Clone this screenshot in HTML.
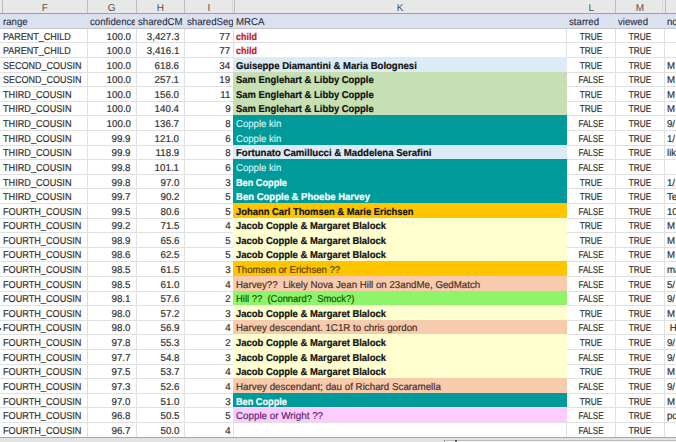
<!DOCTYPE html>
<html><head><meta charset="utf-8"><style>
html,body{margin:0;padding:0;background:#fff;}
body{width:676px;height:442px;overflow:hidden;position:relative;font-family:"Liberation Sans",sans-serif;font-size:10.0px;color:#333333;}
.t{position:absolute;white-space:pre;line-height:normal;text-rendering:geometricPrecision;-webkit-text-stroke:0.2px currentColor;}
.hl{position:absolute;left:0;width:676px;height:1px;background:#e0e0e0;}
.vl{position:absolute;top:13.40px;height:442px;width:1px;background:#e0e0e0;}
.hrow{position:absolute;left:0;width:676px;background:#dce1f0;}
.fill{position:absolute;}
.chbar{position:absolute;left:0;top:0;width:676px;background:#e8e8e8;}
.chs{position:absolute;top:0;width:1px;background:#bcbcbc;}
.chb{position:absolute;left:0;width:676px;height:1.2px;background:#a0a0a0;}
.clip{position:absolute;overflow:hidden;}
.bbar{position:absolute;left:0;width:676px;height:20px;background:#e3e3e3;border-top:1px solid #a8a8a8;}
</style></head>
<body>
<div class="hl" style="top:27.70px"></div>
<div class="hl" style="top:42.30px"></div>
<div class="hl" style="top:56.90px"></div>
<div class="hl" style="top:71.50px"></div>
<div class="hl" style="top:86.10px"></div>
<div class="hl" style="top:100.70px"></div>
<div class="hl" style="top:115.30px"></div>
<div class="hl" style="top:129.90px"></div>
<div class="hl" style="top:144.50px"></div>
<div class="hl" style="top:159.10px"></div>
<div class="hl" style="top:173.70px"></div>
<div class="hl" style="top:188.30px"></div>
<div class="hl" style="top:202.90px"></div>
<div class="hl" style="top:217.50px"></div>
<div class="hl" style="top:232.10px"></div>
<div class="hl" style="top:246.70px"></div>
<div class="hl" style="top:261.30px"></div>
<div class="hl" style="top:275.90px"></div>
<div class="hl" style="top:290.50px"></div>
<div class="hl" style="top:305.10px"></div>
<div class="hl" style="top:319.70px"></div>
<div class="hl" style="top:334.30px"></div>
<div class="hl" style="top:348.90px"></div>
<div class="hl" style="top:363.50px"></div>
<div class="hl" style="top:378.10px"></div>
<div class="hl" style="top:392.70px"></div>
<div class="hl" style="top:407.30px"></div>
<div class="hl" style="top:421.90px"></div>
<div class="hl" style="top:436.50px"></div>
<div class="vl" style="left:86.70px"></div>
<div class="vl" style="left:135.50px"></div>
<div class="vl" style="left:184.20px"></div>
<div class="vl" style="left:232.70px"></div>
<div class="vl" style="left:566.30px"></div>
<div class="vl" style="left:615.10px"></div>
<div class="vl" style="left:663.70px"></div>
<div class="hrow" style="top:13.40px;height:14.80px"></div>
<div class="hl" style="top:27.60px;background:#c4c6cc"></div>
<div class="fill" style="top:56.90px;height:15.10px;left:233.20px;width:334.10px;background:#ddebf7"></div>
<div class="fill" style="top:71.50px;height:15.10px;left:233.20px;width:334.10px;background:#c6e0b4"></div>
<div class="fill" style="top:86.10px;height:15.10px;left:233.20px;width:334.10px;background:#c6e0b4"></div>
<div class="fill" style="top:100.70px;height:15.10px;left:233.20px;width:334.10px;background:#c6e0b4"></div>
<div class="fill" style="top:115.30px;height:15.10px;left:233.20px;width:334.10px;background:#009a9a"></div>
<div class="fill" style="top:129.90px;height:15.10px;left:233.20px;width:334.10px;background:#009a9a"></div>
<div class="fill" style="top:144.50px;height:15.10px;left:233.20px;width:334.10px;background:#ddebf7"></div>
<div class="fill" style="top:159.10px;height:15.10px;left:233.20px;width:334.10px;background:#009a9a"></div>
<div class="fill" style="top:173.70px;height:15.10px;left:233.20px;width:334.10px;background:#009a9a"></div>
<div class="fill" style="top:188.30px;height:15.10px;left:233.20px;width:334.10px;background:#009a9a"></div>
<div class="fill" style="top:202.90px;height:15.10px;left:233.20px;width:334.10px;background:#ffc600"></div>
<div class="fill" style="top:217.50px;height:15.10px;left:233.20px;width:334.10px;background:#ffffd0"></div>
<div class="fill" style="top:232.10px;height:15.10px;left:233.20px;width:334.10px;background:#ffffd0"></div>
<div class="fill" style="top:246.70px;height:15.10px;left:233.20px;width:334.10px;background:#ffffd0"></div>
<div class="fill" style="top:261.30px;height:15.10px;left:233.20px;width:334.10px;background:#ffc600"></div>
<div class="fill" style="top:275.90px;height:15.10px;left:233.20px;width:334.10px;background:#f8cbad"></div>
<div class="fill" style="top:290.50px;height:15.10px;left:233.20px;width:334.10px;background:#8ef46a"></div>
<div class="fill" style="top:305.10px;height:15.10px;left:233.20px;width:334.10px;background:#ffffd0"></div>
<div class="fill" style="top:319.70px;height:15.10px;left:233.20px;width:334.10px;background:#f8cbad"></div>
<div class="fill" style="top:334.30px;height:15.10px;left:233.20px;width:334.10px;background:#ffffd0"></div>
<div class="fill" style="top:348.90px;height:15.10px;left:233.20px;width:334.10px;background:#ffffd0"></div>
<div class="fill" style="top:363.50px;height:15.10px;left:233.20px;width:334.10px;background:#ffffd0"></div>
<div class="fill" style="top:378.10px;height:15.10px;left:233.20px;width:334.10px;background:#f8cbad"></div>
<div class="fill" style="top:392.70px;height:15.10px;left:233.20px;width:334.10px;background:#009a9a"></div>
<div class="fill" style="top:407.30px;height:15.10px;left:233.20px;width:334.10px;background:#ffccff"></div>
<div class="chbar" style="height:13.40px"></div>
<div class="chs" style="left:2.00px;height:13.40px"></div>
<div class="chs" style="left:86.70px;height:13.40px"></div>
<div class="chs" style="left:135.50px;height:13.40px"></div>
<div class="chs" style="left:184.20px;height:13.40px"></div>
<div class="chs" style="left:615.10px;height:13.40px"></div>
<div class="chs" style="left:231.90px;height:13.40px;background:#d8d8d8"></div>
<div class="chs" style="left:233.90px;height:13.40px"></div>
<div class="chs" style="left:662.10px;height:13.40px;background:#d8d8d8"></div>
<div class="chs" style="left:664.80px;height:13.40px"></div>
<div class="chb" style="top:12.80px"></div>
<span class="t" style="top:2.75px;left:44.85px;transform:translateX(-50%);color:#505050;font-size:10.00px;-webkit-text-stroke:0;">F</span>
<span class="t" style="top:2.75px;left:111.60px;transform:translateX(-50%);color:#505050;font-size:10.00px;-webkit-text-stroke:0;">G</span>
<span class="t" style="top:2.75px;left:160.35px;transform:translateX(-50%);color:#505050;font-size:10.00px;-webkit-text-stroke:0;">H</span>
<span class="t" style="top:2.75px;left:208.95px;transform:translateX(-50%);color:#505050;font-size:10.00px;-webkit-text-stroke:0;">I</span>
<span class="t" style="top:2.75px;left:400.00px;transform:translateX(-50%);color:#505050;font-size:10.00px;-webkit-text-stroke:0;">K</span>
<span class="t" style="top:2.75px;left:591.20px;transform:translateX(-50%);color:#505050;font-size:10.00px;-webkit-text-stroke:0;">L</span>
<span class="t" style="top:2.75px;left:639.90px;transform:translateX(-50%);color:#505050;font-size:10.00px;-webkit-text-stroke:0;">M</span>
<div class="clip" style="left:2.50px;width:84.20px;top:13.40px;height:14.80px"><span class="t" style="top:3.45px;left:0.80px;color:#263040;transform:scaleX(0.966);transform-origin:left;-webkit-text-stroke:0.10px;">range</span></div>
<div class="clip" style="left:87.20px;width:48.30px;top:13.40px;height:14.80px"><span class="t" style="top:3.45px;left:2.40px;color:#263040;transform:scaleX(0.966);transform-origin:left;-webkit-text-stroke:0.10px;">confidence</span></div>
<div class="clip" style="left:136.00px;width:48.20px;top:13.40px;height:14.80px"><span class="t" style="top:3.45px;left:2.40px;color:#263040;transform:scaleX(0.966);transform-origin:left;-webkit-text-stroke:0.10px;">sharedCM</span></div>
<div class="clip" style="left:184.70px;width:48.00px;top:13.40px;height:14.80px"><span class="t" style="top:3.45px;left:2.40px;color:#263040;transform:scaleX(0.966);transform-origin:left;-webkit-text-stroke:0.10px;">sharedSegments</span></div>
<div class="clip" style="left:233.20px;width:333.10px;top:13.40px;height:14.80px"><span class="t" style="top:3.45px;left:2.40px;color:#263040;transform:scaleX(0.966);transform-origin:left;-webkit-text-stroke:0.10px;">MRCA</span></div>
<div class="clip" style="left:566.80px;width:48.30px;top:13.40px;height:14.80px"><span class="t" style="top:3.45px;left:2.40px;color:#263040;transform:scaleX(0.966);transform-origin:left;-webkit-text-stroke:0.10px;">starred</span></div>
<div class="clip" style="left:615.60px;width:48.10px;top:13.40px;height:14.80px"><span class="t" style="top:3.45px;left:2.40px;color:#263040;transform:scaleX(0.966);transform-origin:left;-webkit-text-stroke:0.10px;">viewed</span></div>
<div class="clip" style="left:664.20px;width:75.30px;top:13.40px;height:14.80px"><span class="t" style="top:3.45px;left:2.40px;color:#263040;transform:scaleX(0.966);transform-origin:left;-webkit-text-stroke:0.10px;">notes</span></div>
<span class="t" style="top:32.00px;left:3.40px;transform:scaleX(0.8999);transform-origin:left;">PARENT_CHILD</span>
<span class="t" style="top:32.00px;right:545.40px;transform:scaleX(0.976);transform-origin:right;">100.0</span>
<span class="t" style="top:32.00px;right:496.70px;transform:scaleX(0.976);transform-origin:right;">3,427.3</span>
<span class="t" style="top:32.00px;right:445.40px;transform:scaleX(0.976);transform-origin:right;">77</span>
<span class="t" style="top:32.00px;left:235.50px;color:#c0202a;font-weight:bold;transform:scaleX(0.8958);transform-origin:left;">child</span>
<span class="t" style="top:32.00px;left:591.20px;transform:translateX(-50%) scaleX(0.825);">TRUE</span>
<span class="t" style="top:32.00px;left:639.90px;transform:translateX(-50%) scaleX(0.825);">TRUE</span>
<span class="t" style="top:46.00px;left:3.40px;transform:scaleX(0.8999);transform-origin:left;">PARENT_CHILD</span>
<span class="t" style="top:46.00px;right:545.40px;transform:scaleX(0.976);transform-origin:right;">100.0</span>
<span class="t" style="top:46.00px;right:496.70px;transform:scaleX(0.976);transform-origin:right;">3,416.1</span>
<span class="t" style="top:46.00px;right:445.40px;transform:scaleX(0.976);transform-origin:right;">77</span>
<span class="t" style="top:46.00px;left:235.50px;color:#c0202a;font-weight:bold;transform:scaleX(0.8958);transform-origin:left;">child</span>
<span class="t" style="top:46.00px;left:591.20px;transform:translateX(-50%) scaleX(0.825);">TRUE</span>
<span class="t" style="top:46.00px;left:639.90px;transform:translateX(-50%) scaleX(0.825);">TRUE</span>
<span class="t" style="top:61.00px;left:3.40px;transform:scaleX(0.8992);transform-origin:left;">SECOND_COUSIN</span>
<span class="t" style="top:61.00px;right:545.40px;transform:scaleX(0.976);transform-origin:right;">100.0</span>
<span class="t" style="top:61.00px;right:496.70px;transform:scaleX(0.976);transform-origin:right;">618.6</span>
<span class="t" style="top:61.00px;right:445.40px;transform:scaleX(0.976);transform-origin:right;">34</span>
<span class="t" style="top:61.00px;left:235.50px;color:#111111;font-weight:bold;transform:scaleX(0.9541);transform-origin:left;">Guiseppe Diamantini &amp; Maria Bolognesi</span>
<span class="t" style="top:61.00px;left:591.20px;transform:translateX(-50%) scaleX(0.825);">TRUE</span>
<span class="t" style="top:61.00px;left:639.90px;transform:translateX(-50%) scaleX(0.825);">TRUE</span>
<span class="t" style="top:61.00px;left:666.50px;transform:scaleX(0.965);transform-origin:left;">M</span>
<span class="t" style="top:75.00px;left:3.40px;transform:scaleX(0.8992);transform-origin:left;">SECOND_COUSIN</span>
<span class="t" style="top:75.00px;right:545.40px;transform:scaleX(0.976);transform-origin:right;">100.0</span>
<span class="t" style="top:75.00px;right:496.70px;transform:scaleX(0.976);transform-origin:right;">257.1</span>
<span class="t" style="top:75.00px;right:445.40px;transform:scaleX(0.976);transform-origin:right;">19</span>
<span class="t" style="top:75.00px;left:235.50px;color:#111111;font-weight:bold;transform:scaleX(0.9423);transform-origin:left;">Sam Englehart &amp; Libby Copple</span>
<span class="t" style="top:75.00px;left:591.20px;transform:translateX(-50%) scaleX(0.805);">FALSE</span>
<span class="t" style="top:75.00px;left:639.90px;transform:translateX(-50%) scaleX(0.825);">TRUE</span>
<span class="t" style="top:75.00px;left:666.50px;transform:scaleX(0.965);transform-origin:left;">M</span>
<span class="t" style="top:90.00px;left:3.40px;transform:scaleX(0.9133);transform-origin:left;">THIRD_COUSIN</span>
<span class="t" style="top:90.00px;right:545.40px;transform:scaleX(0.976);transform-origin:right;">100.0</span>
<span class="t" style="top:90.00px;right:496.70px;transform:scaleX(0.976);transform-origin:right;">156.0</span>
<span class="t" style="top:90.00px;right:445.40px;transform:scaleX(0.976);transform-origin:right;">11</span>
<span class="t" style="top:90.00px;left:235.50px;color:#111111;font-weight:bold;transform:scaleX(0.9423);transform-origin:left;">Sam Englehart &amp; Libby Copple</span>
<span class="t" style="top:90.00px;left:591.20px;transform:translateX(-50%) scaleX(0.825);">TRUE</span>
<span class="t" style="top:90.00px;left:639.90px;transform:translateX(-50%) scaleX(0.825);">TRUE</span>
<span class="t" style="top:90.00px;left:666.50px;transform:scaleX(0.965);transform-origin:left;">M</span>
<span class="t" style="top:104.00px;left:3.40px;transform:scaleX(0.9133);transform-origin:left;">THIRD_COUSIN</span>
<span class="t" style="top:104.00px;right:545.40px;transform:scaleX(0.976);transform-origin:right;">100.0</span>
<span class="t" style="top:104.00px;right:496.70px;transform:scaleX(0.976);transform-origin:right;">140.4</span>
<span class="t" style="top:104.00px;right:445.40px;transform:scaleX(0.976);transform-origin:right;">9</span>
<span class="t" style="top:104.00px;left:235.50px;color:#111111;font-weight:bold;transform:scaleX(0.9423);transform-origin:left;">Sam Englehart &amp; Libby Copple</span>
<span class="t" style="top:104.00px;left:591.20px;transform:translateX(-50%) scaleX(0.825);">TRUE</span>
<span class="t" style="top:104.00px;left:639.90px;transform:translateX(-50%) scaleX(0.825);">TRUE</span>
<span class="t" style="top:104.00px;left:666.50px;transform:scaleX(0.965);transform-origin:left;">M</span>
<span class="t" style="top:119.00px;left:3.40px;transform:scaleX(0.9133);transform-origin:left;">THIRD_COUSIN</span>
<span class="t" style="top:119.00px;right:545.40px;transform:scaleX(0.976);transform-origin:right;">100.0</span>
<span class="t" style="top:119.00px;right:496.70px;transform:scaleX(0.976);transform-origin:right;">136.7</span>
<span class="t" style="top:119.00px;right:445.40px;transform:scaleX(0.976);transform-origin:right;">8</span>
<span class="t" style="top:119.00px;left:235.50px;color:#cdeeee;transform:scaleX(0.9582);transform-origin:left;">Copple kin</span>
<span class="t" style="top:119.00px;left:591.20px;transform:translateX(-50%) scaleX(0.805);">FALSE</span>
<span class="t" style="top:119.00px;left:639.90px;transform:translateX(-50%) scaleX(0.825);">TRUE</span>
<span class="t" style="top:119.00px;left:666.50px;transform:scaleX(0.965);transform-origin:left;">9/</span>
<span class="t" style="top:134.00px;left:3.40px;transform:scaleX(0.9133);transform-origin:left;">THIRD_COUSIN</span>
<span class="t" style="top:134.00px;right:545.40px;transform:scaleX(0.976);transform-origin:right;">99.9</span>
<span class="t" style="top:134.00px;right:496.70px;transform:scaleX(0.976);transform-origin:right;">121.0</span>
<span class="t" style="top:134.00px;right:445.40px;transform:scaleX(0.976);transform-origin:right;">6</span>
<span class="t" style="top:134.00px;left:235.50px;color:#cdeeee;transform:scaleX(0.9582);transform-origin:left;">Copple kin</span>
<span class="t" style="top:134.00px;left:591.20px;transform:translateX(-50%) scaleX(0.805);">FALSE</span>
<span class="t" style="top:134.00px;left:639.90px;transform:translateX(-50%) scaleX(0.825);">TRUE</span>
<span class="t" style="top:134.00px;left:666.50px;transform:scaleX(0.965);transform-origin:left;">1/</span>
<span class="t" style="top:148.00px;left:3.40px;transform:scaleX(0.9133);transform-origin:left;">THIRD_COUSIN</span>
<span class="t" style="top:148.00px;right:545.40px;transform:scaleX(0.976);transform-origin:right;">99.9</span>
<span class="t" style="top:148.00px;right:496.70px;transform:scaleX(0.976);transform-origin:right;">118.9</span>
<span class="t" style="top:148.00px;right:445.40px;transform:scaleX(0.976);transform-origin:right;">8</span>
<span class="t" style="top:148.00px;left:235.50px;color:#111111;font-weight:bold;transform:scaleX(0.9611);transform-origin:left;">Fortunato Camillucci &amp; Maddelena Serafini</span>
<span class="t" style="top:148.00px;left:591.20px;transform:translateX(-50%) scaleX(0.805);">FALSE</span>
<span class="t" style="top:148.00px;left:639.90px;transform:translateX(-50%) scaleX(0.825);">TRUE</span>
<span class="t" style="top:148.00px;left:666.50px;transform:scaleX(0.965);transform-origin:left;">lik</span>
<span class="t" style="top:163.00px;left:3.40px;transform:scaleX(0.9133);transform-origin:left;">THIRD_COUSIN</span>
<span class="t" style="top:163.00px;right:545.40px;transform:scaleX(0.976);transform-origin:right;">99.8</span>
<span class="t" style="top:163.00px;right:496.70px;transform:scaleX(0.976);transform-origin:right;">101.1</span>
<span class="t" style="top:163.00px;right:445.40px;transform:scaleX(0.976);transform-origin:right;">6</span>
<span class="t" style="top:163.00px;left:235.50px;color:#cdeeee;transform:scaleX(0.9582);transform-origin:left;">Copple kin</span>
<span class="t" style="top:163.00px;left:591.20px;transform:translateX(-50%) scaleX(0.805);">FALSE</span>
<span class="t" style="top:163.00px;left:639.90px;transform:translateX(-50%) scaleX(0.825);">TRUE</span>
<span class="t" style="top:178.00px;left:3.40px;transform:scaleX(0.9133);transform-origin:left;">THIRD_COUSIN</span>
<span class="t" style="top:178.00px;right:545.40px;transform:scaleX(0.976);transform-origin:right;">99.8</span>
<span class="t" style="top:178.00px;right:496.70px;transform:scaleX(0.976);transform-origin:right;">97.0</span>
<span class="t" style="top:178.00px;right:445.40px;transform:scaleX(0.976);transform-origin:right;">3</span>
<span class="t" style="top:178.00px;left:235.50px;color:#ffffff;font-weight:bold;transform:scaleX(0.9171);transform-origin:left;">Ben Copple</span>
<span class="t" style="top:178.00px;left:591.20px;transform:translateX(-50%) scaleX(0.825);">TRUE</span>
<span class="t" style="top:178.00px;left:639.90px;transform:translateX(-50%) scaleX(0.825);">TRUE</span>
<span class="t" style="top:178.00px;left:666.50px;transform:scaleX(0.965);transform-origin:left;">1/</span>
<span class="t" style="top:192.00px;left:3.40px;transform:scaleX(0.9133);transform-origin:left;">THIRD_COUSIN</span>
<span class="t" style="top:192.00px;right:545.40px;transform:scaleX(0.976);transform-origin:right;">99.7</span>
<span class="t" style="top:192.00px;right:496.70px;transform:scaleX(0.976);transform-origin:right;">90.2</span>
<span class="t" style="top:192.00px;right:445.40px;transform:scaleX(0.976);transform-origin:right;">5</span>
<span class="t" style="top:192.00px;left:235.50px;color:#ffffff;font-weight:bold;transform:scaleX(0.9526);transform-origin:left;">Ben Copple &amp; Phoebe Harvey</span>
<span class="t" style="top:192.00px;left:591.20px;transform:translateX(-50%) scaleX(0.825);">TRUE</span>
<span class="t" style="top:192.00px;left:639.90px;transform:translateX(-50%) scaleX(0.825);">TRUE</span>
<span class="t" style="top:192.00px;left:666.50px;transform:scaleX(0.965);transform-origin:left;">Te</span>
<span class="t" style="top:207.00px;left:3.40px;transform:scaleX(0.9128);transform-origin:left;">FOURTH_COUSIN</span>
<span class="t" style="top:207.00px;right:545.40px;transform:scaleX(0.976);transform-origin:right;">99.5</span>
<span class="t" style="top:207.00px;right:496.70px;transform:scaleX(0.976);transform-origin:right;">80.6</span>
<span class="t" style="top:207.00px;right:445.40px;transform:scaleX(0.976);transform-origin:right;">5</span>
<span class="t" style="top:207.00px;left:235.50px;color:#111111;font-weight:bold;transform:scaleX(0.9393);transform-origin:left;">Johann Carl Thomsen &amp; Marie Erichsen</span>
<span class="t" style="top:207.00px;left:591.20px;transform:translateX(-50%) scaleX(0.805);">FALSE</span>
<span class="t" style="top:207.00px;left:639.90px;transform:translateX(-50%) scaleX(0.825);">TRUE</span>
<span class="t" style="top:207.00px;left:666.50px;transform:scaleX(0.965);transform-origin:left;">10</span>
<span class="t" style="top:221.00px;left:3.40px;transform:scaleX(0.9128);transform-origin:left;">FOURTH_COUSIN</span>
<span class="t" style="top:221.00px;right:545.40px;transform:scaleX(0.976);transform-origin:right;">99.2</span>
<span class="t" style="top:221.00px;right:496.70px;transform:scaleX(0.976);transform-origin:right;">71.5</span>
<span class="t" style="top:221.00px;right:445.40px;transform:scaleX(0.976);transform-origin:right;">4</span>
<span class="t" style="top:221.00px;left:235.50px;color:#111111;font-weight:bold;transform:scaleX(0.9436);transform-origin:left;">Jacob Copple &amp; Margaret Blalock</span>
<span class="t" style="top:221.00px;left:591.20px;transform:translateX(-50%) scaleX(0.825);">TRUE</span>
<span class="t" style="top:221.00px;left:639.90px;transform:translateX(-50%) scaleX(0.825);">TRUE</span>
<span class="t" style="top:221.00px;left:666.50px;transform:scaleX(0.965);transform-origin:left;">M</span>
<span class="t" style="top:236.00px;left:3.40px;transform:scaleX(0.9128);transform-origin:left;">FOURTH_COUSIN</span>
<span class="t" style="top:236.00px;right:545.40px;transform:scaleX(0.976);transform-origin:right;">98.9</span>
<span class="t" style="top:236.00px;right:496.70px;transform:scaleX(0.976);transform-origin:right;">65.6</span>
<span class="t" style="top:236.00px;right:445.40px;transform:scaleX(0.976);transform-origin:right;">5</span>
<span class="t" style="top:236.00px;left:235.50px;color:#111111;font-weight:bold;transform:scaleX(0.9436);transform-origin:left;">Jacob Copple &amp; Margaret Blalock</span>
<span class="t" style="top:236.00px;left:591.20px;transform:translateX(-50%) scaleX(0.825);">TRUE</span>
<span class="t" style="top:236.00px;left:639.90px;transform:translateX(-50%) scaleX(0.825);">TRUE</span>
<span class="t" style="top:236.00px;left:666.50px;transform:scaleX(0.965);transform-origin:left;">M</span>
<span class="t" style="top:250.00px;left:3.40px;transform:scaleX(0.9128);transform-origin:left;">FOURTH_COUSIN</span>
<span class="t" style="top:250.00px;right:545.40px;transform:scaleX(0.976);transform-origin:right;">98.6</span>
<span class="t" style="top:250.00px;right:496.70px;transform:scaleX(0.976);transform-origin:right;">62.5</span>
<span class="t" style="top:250.00px;right:445.40px;transform:scaleX(0.976);transform-origin:right;">5</span>
<span class="t" style="top:250.00px;left:235.50px;color:#111111;font-weight:bold;transform:scaleX(0.9436);transform-origin:left;">Jacob Copple &amp; Margaret Blalock</span>
<span class="t" style="top:250.00px;left:591.20px;transform:translateX(-50%) scaleX(0.805);">FALSE</span>
<span class="t" style="top:250.00px;left:639.90px;transform:translateX(-50%) scaleX(0.825);">TRUE</span>
<span class="t" style="top:250.00px;left:666.50px;transform:scaleX(0.965);transform-origin:left;">M</span>
<span class="t" style="top:265.00px;left:3.40px;transform:scaleX(0.9128);transform-origin:left;">FOURTH_COUSIN</span>
<span class="t" style="top:265.00px;right:545.40px;transform:scaleX(0.976);transform-origin:right;">98.5</span>
<span class="t" style="top:265.00px;right:496.70px;transform:scaleX(0.976);transform-origin:right;">61.5</span>
<span class="t" style="top:265.00px;right:445.40px;transform:scaleX(0.976);transform-origin:right;">3</span>
<span class="t" style="top:265.00px;left:235.50px;color:#5a4000;transform:scaleX(0.9553);transform-origin:left;">Thomsen or Erichsen ??</span>
<span class="t" style="top:265.00px;left:591.20px;transform:translateX(-50%) scaleX(0.805);">FALSE</span>
<span class="t" style="top:265.00px;left:639.90px;transform:translateX(-50%) scaleX(0.825);">TRUE</span>
<span class="t" style="top:265.00px;left:666.50px;transform:scaleX(0.965);transform-origin:left;">ma</span>
<span class="t" style="top:280.00px;left:3.40px;transform:scaleX(0.9128);transform-origin:left;">FOURTH_COUSIN</span>
<span class="t" style="top:280.00px;right:545.40px;transform:scaleX(0.976);transform-origin:right;">98.5</span>
<span class="t" style="top:280.00px;right:496.70px;transform:scaleX(0.976);transform-origin:right;">61.0</span>
<span class="t" style="top:280.00px;right:445.40px;transform:scaleX(0.976);transform-origin:right;">4</span>
<span class="t" style="top:280.00px;left:235.50px;color:#4a3428;transform:scaleX(0.9721);transform-origin:left;">Harvey??&nbsp; Likely Nova Jean Hill on 23andMe, GedMatch</span>
<span class="t" style="top:280.00px;left:591.20px;transform:translateX(-50%) scaleX(0.805);">FALSE</span>
<span class="t" style="top:280.00px;left:639.90px;transform:translateX(-50%) scaleX(0.825);">TRUE</span>
<span class="t" style="top:280.00px;left:666.50px;transform:scaleX(0.965);transform-origin:left;">5/</span>
<span class="t" style="top:294.00px;left:3.40px;transform:scaleX(0.9128);transform-origin:left;">FOURTH_COUSIN</span>
<span class="t" style="top:294.00px;right:545.40px;transform:scaleX(0.976);transform-origin:right;">98.1</span>
<span class="t" style="top:294.00px;right:496.70px;transform:scaleX(0.976);transform-origin:right;">57.6</span>
<span class="t" style="top:294.00px;right:445.40px;transform:scaleX(0.976);transform-origin:right;">2</span>
<span class="t" style="top:294.00px;left:235.50px;color:#0a5a0a;transform:scaleX(0.9428);transform-origin:left;">Hill ??&nbsp; (Connard?&nbsp; Smock?)</span>
<span class="t" style="top:294.00px;left:591.20px;transform:translateX(-50%) scaleX(0.805);">FALSE</span>
<span class="t" style="top:294.00px;left:639.90px;transform:translateX(-50%) scaleX(0.825);">TRUE</span>
<span class="t" style="top:294.00px;left:666.50px;transform:scaleX(0.965);transform-origin:left;">9/</span>
<span class="t" style="top:309.00px;left:3.40px;transform:scaleX(0.9128);transform-origin:left;">FOURTH_COUSIN</span>
<span class="t" style="top:309.00px;right:545.40px;transform:scaleX(0.976);transform-origin:right;">98.0</span>
<span class="t" style="top:309.00px;right:496.70px;transform:scaleX(0.976);transform-origin:right;">57.2</span>
<span class="t" style="top:309.00px;right:445.40px;transform:scaleX(0.976);transform-origin:right;">3</span>
<span class="t" style="top:309.00px;left:235.50px;color:#111111;font-weight:bold;transform:scaleX(0.9436);transform-origin:left;">Jacob Copple &amp; Margaret Blalock</span>
<span class="t" style="top:309.00px;left:591.20px;transform:translateX(-50%) scaleX(0.825);">TRUE</span>
<span class="t" style="top:309.00px;left:639.90px;transform:translateX(-50%) scaleX(0.825);">TRUE</span>
<span class="t" style="top:309.00px;left:666.50px;transform:scaleX(0.965);transform-origin:left;">M</span>
<span class="t" style="top:323.00px;left:3.40px;transform:scaleX(0.9128);transform-origin:left;">FOURTH_COUSIN</span>
<span class="t" style="top:323.00px;right:545.40px;transform:scaleX(0.976);transform-origin:right;">98.0</span>
<span class="t" style="top:323.00px;right:496.70px;transform:scaleX(0.976);transform-origin:right;">56.9</span>
<span class="t" style="top:323.00px;right:445.40px;transform:scaleX(0.976);transform-origin:right;">4</span>
<span class="t" style="top:323.00px;left:235.50px;color:#4a3428;transform:scaleX(0.9749);transform-origin:left;">Harvey descendant. 1C1R to chris gordon</span>
<span class="t" style="top:323.00px;left:591.20px;transform:translateX(-50%) scaleX(0.805);">FALSE</span>
<span class="t" style="top:323.00px;left:639.90px;transform:translateX(-50%) scaleX(0.825);">TRUE</span>
<span class="t" style="top:323.00px;left:666.50px;transform:scaleX(0.965);transform-origin:left;"> H</span>
<span class="t" style="top:338.00px;left:3.40px;transform:scaleX(0.9128);transform-origin:left;">FOURTH_COUSIN</span>
<span class="t" style="top:338.00px;right:545.40px;transform:scaleX(0.976);transform-origin:right;">97.8</span>
<span class="t" style="top:338.00px;right:496.70px;transform:scaleX(0.976);transform-origin:right;">55.3</span>
<span class="t" style="top:338.00px;right:445.40px;transform:scaleX(0.976);transform-origin:right;">2</span>
<span class="t" style="top:338.00px;left:235.50px;color:#111111;font-weight:bold;transform:scaleX(0.9436);transform-origin:left;">Jacob Copple &amp; Margaret Blalock</span>
<span class="t" style="top:338.00px;left:591.20px;transform:translateX(-50%) scaleX(0.825);">TRUE</span>
<span class="t" style="top:338.00px;left:639.90px;transform:translateX(-50%) scaleX(0.825);">TRUE</span>
<span class="t" style="top:338.00px;left:666.50px;transform:scaleX(0.965);transform-origin:left;">9/</span>
<span class="t" style="top:353.00px;left:3.40px;transform:scaleX(0.9128);transform-origin:left;">FOURTH_COUSIN</span>
<span class="t" style="top:353.00px;right:545.40px;transform:scaleX(0.976);transform-origin:right;">97.7</span>
<span class="t" style="top:353.00px;right:496.70px;transform:scaleX(0.976);transform-origin:right;">54.8</span>
<span class="t" style="top:353.00px;right:445.40px;transform:scaleX(0.976);transform-origin:right;">3</span>
<span class="t" style="top:353.00px;left:235.50px;color:#111111;font-weight:bold;transform:scaleX(0.9436);transform-origin:left;">Jacob Copple &amp; Margaret Blalock</span>
<span class="t" style="top:353.00px;left:591.20px;transform:translateX(-50%) scaleX(0.805);">FALSE</span>
<span class="t" style="top:353.00px;left:639.90px;transform:translateX(-50%) scaleX(0.825);">TRUE</span>
<span class="t" style="top:353.00px;left:666.50px;transform:scaleX(0.965);transform-origin:left;">9/</span>
<span class="t" style="top:367.00px;left:3.40px;transform:scaleX(0.9128);transform-origin:left;">FOURTH_COUSIN</span>
<span class="t" style="top:367.00px;right:545.40px;transform:scaleX(0.976);transform-origin:right;">97.5</span>
<span class="t" style="top:367.00px;right:496.70px;transform:scaleX(0.976);transform-origin:right;">53.7</span>
<span class="t" style="top:367.00px;right:445.40px;transform:scaleX(0.976);transform-origin:right;">4</span>
<span class="t" style="top:367.00px;left:235.50px;color:#111111;font-weight:bold;transform:scaleX(0.9436);transform-origin:left;">Jacob Copple &amp; Margaret Blalock</span>
<span class="t" style="top:367.00px;left:591.20px;transform:translateX(-50%) scaleX(0.825);">TRUE</span>
<span class="t" style="top:367.00px;left:639.90px;transform:translateX(-50%) scaleX(0.825);">TRUE</span>
<span class="t" style="top:367.00px;left:666.50px;transform:scaleX(0.965);transform-origin:left;">M</span>
<span class="t" style="top:382.00px;left:3.40px;transform:scaleX(0.9128);transform-origin:left;">FOURTH_COUSIN</span>
<span class="t" style="top:382.00px;right:545.40px;transform:scaleX(0.976);transform-origin:right;">97.3</span>
<span class="t" style="top:382.00px;right:496.70px;transform:scaleX(0.976);transform-origin:right;">52.6</span>
<span class="t" style="top:382.00px;right:445.40px;transform:scaleX(0.976);transform-origin:right;">4</span>
<span class="t" style="top:382.00px;left:235.50px;color:#4a3428;transform:scaleX(0.9777);transform-origin:left;">Harvey descendant; dau of Richard Scaramella</span>
<span class="t" style="top:382.00px;left:591.20px;transform:translateX(-50%) scaleX(0.805);">FALSE</span>
<span class="t" style="top:382.00px;left:639.90px;transform:translateX(-50%) scaleX(0.825);">TRUE</span>
<span class="t" style="top:382.00px;left:666.50px;transform:scaleX(0.965);transform-origin:left;">9/</span>
<span class="t" style="top:397.00px;left:3.40px;transform:scaleX(0.9128);transform-origin:left;">FOURTH_COUSIN</span>
<span class="t" style="top:397.00px;right:545.40px;transform:scaleX(0.976);transform-origin:right;">97.0</span>
<span class="t" style="top:397.00px;right:496.70px;transform:scaleX(0.976);transform-origin:right;">51.0</span>
<span class="t" style="top:397.00px;right:445.40px;transform:scaleX(0.976);transform-origin:right;">3</span>
<span class="t" style="top:397.00px;left:235.50px;color:#ffffff;font-weight:bold;transform:scaleX(0.9171);transform-origin:left;">Ben Copple</span>
<span class="t" style="top:397.00px;left:591.20px;transform:translateX(-50%) scaleX(0.825);">TRUE</span>
<span class="t" style="top:397.00px;left:639.90px;transform:translateX(-50%) scaleX(0.825);">TRUE</span>
<span class="t" style="top:397.00px;left:666.50px;transform:scaleX(0.965);transform-origin:left;">M</span>
<span class="t" style="top:411.00px;left:3.40px;transform:scaleX(0.9128);transform-origin:left;">FOURTH_COUSIN</span>
<span class="t" style="top:411.00px;right:545.40px;transform:scaleX(0.976);transform-origin:right;">96.8</span>
<span class="t" style="top:411.00px;right:496.70px;transform:scaleX(0.976);transform-origin:right;">50.5</span>
<span class="t" style="top:411.00px;right:445.40px;transform:scaleX(0.976);transform-origin:right;">5</span>
<span class="t" style="top:411.00px;left:235.50px;color:#5c2a70;transform:scaleX(0.9807);transform-origin:left;">Copple or Wright ??</span>
<span class="t" style="top:411.00px;left:591.20px;transform:translateX(-50%) scaleX(0.805);">FALSE</span>
<span class="t" style="top:411.00px;left:639.90px;transform:translateX(-50%) scaleX(0.825);">TRUE</span>
<span class="t" style="top:411.00px;left:666.50px;transform:scaleX(0.965);transform-origin:left;">po</span>
<span class="t" style="top:426.00px;left:3.40px;transform:scaleX(0.9128);transform-origin:left;">FOURTH_COUSIN</span>
<span class="t" style="top:426.00px;right:545.40px;transform:scaleX(0.976);transform-origin:right;">96.7</span>
<span class="t" style="top:426.00px;right:496.70px;transform:scaleX(0.976);transform-origin:right;">50.0</span>
<span class="t" style="top:426.00px;right:445.40px;transform:scaleX(0.976);transform-origin:right;">4</span>
<span class="t" style="top:426.00px;left:591.20px;transform:translateX(-50%) scaleX(0.805);">FALSE</span>
<span class="t" style="top:426.00px;left:639.90px;transform:translateX(-50%) scaleX(0.825);">TRUE</span>
<div class="bbar" style="top:437.00px"></div>
<div style="position:absolute;left:444px;top:440px;width:232px;height:2px;background:#f4f4f4;border-top:1px solid #b8b8b8"></div>
<div style="position:absolute;left:444px;top:440px;width:1px;height:2px;background:#a0a0a0"></div>
<div style="position:absolute;left:455px;top:440px;width:2px;height:2px;background:#606060"></div>
<div style="position:absolute;left:0;top:328.20px;width:1.2px;height:2px;background:#444"></div>
</body></html>
